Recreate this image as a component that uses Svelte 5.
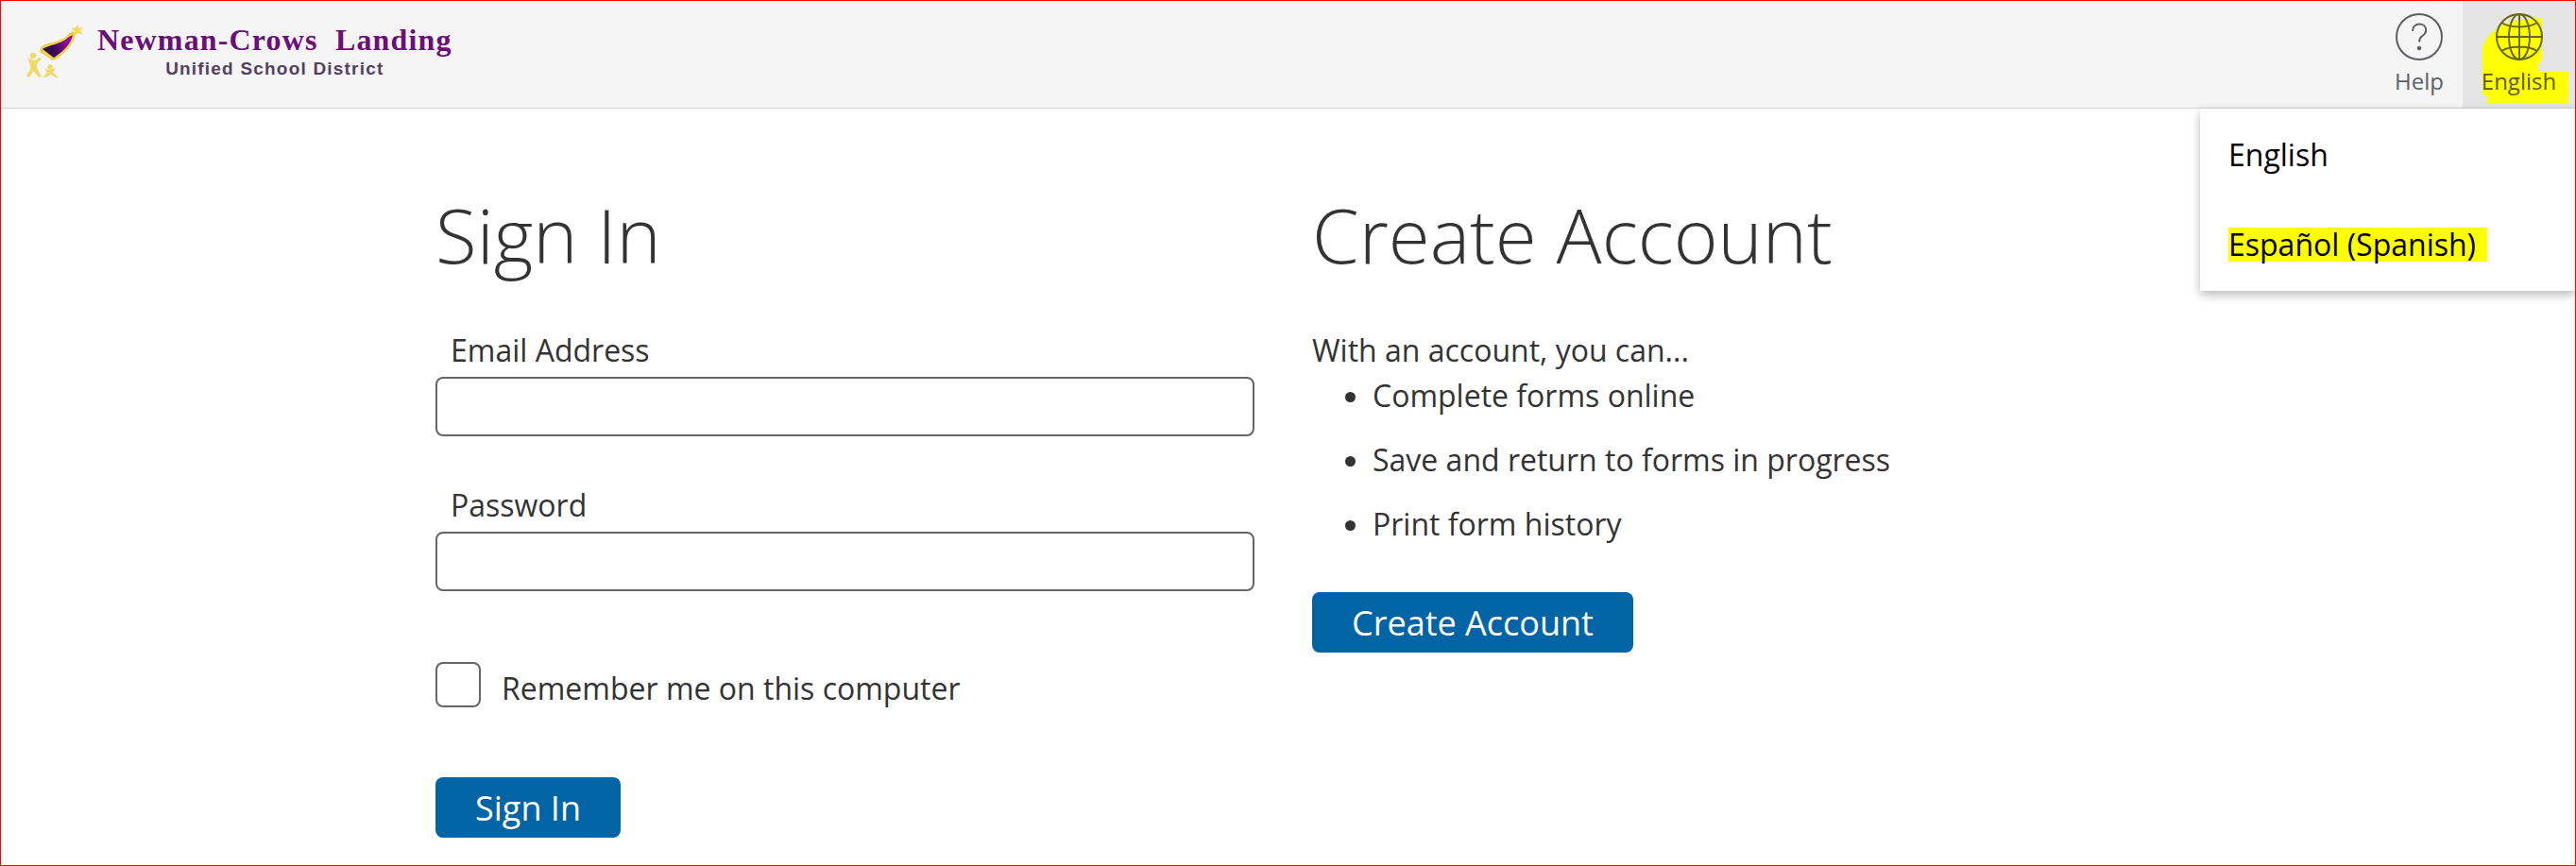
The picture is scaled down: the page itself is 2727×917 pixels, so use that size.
<script>
  const benefits = ['Complete forms online', 'Save and return to forms in progress', 'Print form history'];
</script>

<div class="page">
  <header class="topbar">
    <div class="logo">
      <svg class="crest" viewBox="0 0 64 64" width="64" height="64" aria-hidden="true">
        <defs>
          <linearGradient id="band" x1="0" x2="1" y1="0.6" y2="0.3">
            <stop offset="0.3" stop-color="#33094f" />
            <stop offset="0.8" stop-color="#8a0f9c" />
          </linearGradient>
        </defs>
        <path d="M56 0l1.500 3.800 4.500-.8-2.800 3.500 1.800 4.200-4.600-1.700-3.900 2.700.6-4.800-3.600-3 4.700-.8z" fill="#f2d95f" />
        <path d="M17 24C24 18 36 20 46 11L50 7 54 9C52 20 46 28 33 37L30 38 16 29Z" fill="#f1cf4a" />
        <path d="M19 26C26 21 37 22 47 13L51 11C49 20 43 27 31 35Z" fill="url(#band)" />
        <g fill="#efd967">
          <circle cx="9" cy="33" r="3.200" />
          <path d="M7 37L3 35 5 40 6.500 46 2 55 5 56 9.500 49 15 56 18 55 13 46 13.500 41 18 36 15 35 11 38Z" />
          <circle cx="27" cy="45" r="2.800" />
          <path d="M25 48L21 46 24 51 19 56 24 55.500 27.500 52.500 33 56 36 56 30 51 33 46 30 47Z" />
        </g>
      </svg>
      <div class="wordmark">
        <div class="district">Newman-Crows&nbsp;&nbsp;Landing</div>
        <div class="subtitle">Unified School District</div>
      </div>
    </div>

    <nav class="tools">
      <button class="tool help">
        <svg viewBox="0 0 50 50" width="50" height="50" aria-hidden="true">
          <circle cx="25" cy="25" r="24" fill="none" stroke="#5f5f63" stroke-width="2" />
          <path d="M18 19c0-5 3.200-7.500 7.200-7.500s7 2.500 7 6.500c0 3-1.700 4.600-3.800 6-2.200 1.500-3.200 2.800-3.200 5.500v1" fill="none" stroke="#5f5f63" stroke-width="2" />
          <circle cx="25" cy="37" r="2.300" fill="#5f5f63" />
        </svg>
        <span>Help</span>
      </button>
      <button class="tool lang">
        <svg class="blob" viewBox="0 0 119 113" width="119" height="113" aria-hidden="true">
          <path d="M21 50C24 40 29 34 36 30C44 24 52 21 60 20L84 18V63L80 66V75H112V108H26V100H21Z" fill="#ffff00" />
        </svg>
        <svg class="globe" viewBox="0 0 50 50" width="50" height="50" aria-hidden="true">
          <g fill="none" stroke="#68680f" stroke-width="2">
            <circle cx="25" cy="25" r="24" />
            <ellipse cx="25" cy="25" rx="11" ry="24" />
            <path d="M25 1v48M1 25h48M6 10c10 6 28 6 38 0M6 40c10-6 28-6 38 0" />
          </g>
        </svg>
        <span>English</span>
      </button>
    </nav>
  </header>

  <div class="menu">
    <div class="menu-item">English</div>
    <div class="menu-item"><mark>Español (Spanish)</mark></div>
  </div>

  <main class="columns">
    <section>
      <h1>Sign In</h1>
      <div class="field">
        <label for="email">Email Address</label>
        <input id="email" type="text" />
      </div>
      <div class="field">
        <label for="password">Password</label>
        <input id="password" type="password" />
      </div>
      <div class="remember">
        <span class="box"></span>
        <span class="remember-text">Remember me on this computer</span>
      </div>
      <button class="primary signin">Sign In</button>
    </section>

    <section>
      <h1>Create Account</h1>
      <p class="lead">With an account, you can...</p>
      <ul>
        {#each benefits as item}
          <li>{item}</li>
        {/each}
      </ul>
      <button class="primary create">Create Account</button>
    </section>
  </main>
</div>

<style>
  :global(body) {
    margin: 0;
    background: #fff;
  }

  .page {
    position: relative;
    box-sizing: border-box;
    height: 917px;
    border: 1px solid #f00;
    overflow: hidden;
    font-family: "Open Sans", sans-serif;
    color: #333;
  }

  .topbar {
    height: 113px;
    display: flex;
    justify-content: space-between;
    background: #f5f5f6;
    border-bottom: 1px solid #d4d4d4;
  }

  .logo {
    display: flex;
    align-items: flex-start;
    gap: 13px;
    padding: 25px 0 0 25px;
  }

  .wordmark {
    display: flex;
    flex-direction: column;
    align-items: center;
  }

  .district {
    font-family: "Liberation Serif", serif;
    font-weight: bold;
    font-size: 32px;
    line-height: 32px;
    letter-spacing: 1.15px;
    color: #6a0f78;
  }

  .subtitle {
    margin-top: 5px;
    font-family: "Liberation Sans", sans-serif;
    font-weight: bold;
    font-size: 19px;
    line-height: 20px;
    letter-spacing: 1.2px;
    color: #54405f;
  }

  .tools {
    display: flex;
  }

  .tool {
    position: relative;
    width: 92px;
    padding: 13px 0 0;
    display: flex;
    flex-direction: column;
    align-items: center;
    border: 0;
    background: none;
    font-family: inherit;
    font-size: 24px;
    line-height: 34px;
    color: #5f6066;
  }

  .tool svg:not(.blob) {
    position: relative;
    margin-bottom: 5px;
  }

  .tool span {
    position: relative;
  }

  .lang {
    width: 119px;
    background: #e5e5e5;
    color: #5c5c10;
  }

  .blob {
    position: absolute;
    top: 0;
    left: 0;
  }

  .menu {
    position: absolute;
    top: 114px;
    right: 0;
    width: 397px;
    height: 193px;
    box-sizing: border-box;
    padding: 0 0 0 30px;
    background: #fff;
    box-shadow: 0 4px 10px rgba(0, 0, 0, 0.28);
    color: #000;
    font-size: 32px;
  }

  .menu-item {
    height: 94px;
    display: flex;
    align-items: center;
  }

  .menu-item:first-child {
    height: 97px;
  }

  mark {
    background: #ffff00;
    color: #000;
    padding: 0 12px 0 0;
    line-height: 36px;
  }

  .columns {
    display: grid;
    grid-template-columns: 867px 1fr;
    column-gap: 61px;
    padding: 0 0 0 460px;
  }

  h1 {
    margin: 84px 0 0;
    font-size: 80px;
    line-height: 98px;
    font-weight: 300;
    color: #333;
  }

  .field {
    display: flex;
    flex-direction: column;
    gap: 6px;
    margin-bottom: 51px;
  }

  .field:first-of-type {
    margin-top: 52px;
  }

  label {
    padding-left: 16px;
    font-size: 32px;
    line-height: 44px;
  }

  input {
    box-sizing: border-box;
    height: 63px;
    border: 2px solid #666;
    border-radius: 8px;
    background: #fff;
  }

  .remember {
    display: flex;
    align-items: center;
    gap: 22px;
    font-size: 32px;
    margin-top: 75px;
    height: 48px;
  }

  .remember-text {
    padding-top: 6px;
  }

  .box {
    box-sizing: border-box;
    width: 48px;
    height: 48px;
    border: 2px solid #666;
    border-radius: 8px;
  }

  .primary {
    display: block;
    height: 64px;
    padding: 0;
    border: 0;
    border-radius: 8px;
    background: #0064a5;
    color: #fff;
    font-family: inherit;
    font-size: 36px;
  }

  .signin {
    width: 196px;
    margin-top: 74px;
  }

  .create {
    width: 340px;
    margin-top: 50px;
  }

  .lead {
    margin: 52px 0 0;
    font-size: 32px;
    line-height: 44px;
  }

  ul {
    margin: 4px 0 0;
    padding: 0 0 0 64px;
    font-size: 32px;
    line-height: 44px;
  }

  li {
    margin-bottom: 24px;
  }

  li:last-child {
    margin-bottom: 0;
  }
</style>
